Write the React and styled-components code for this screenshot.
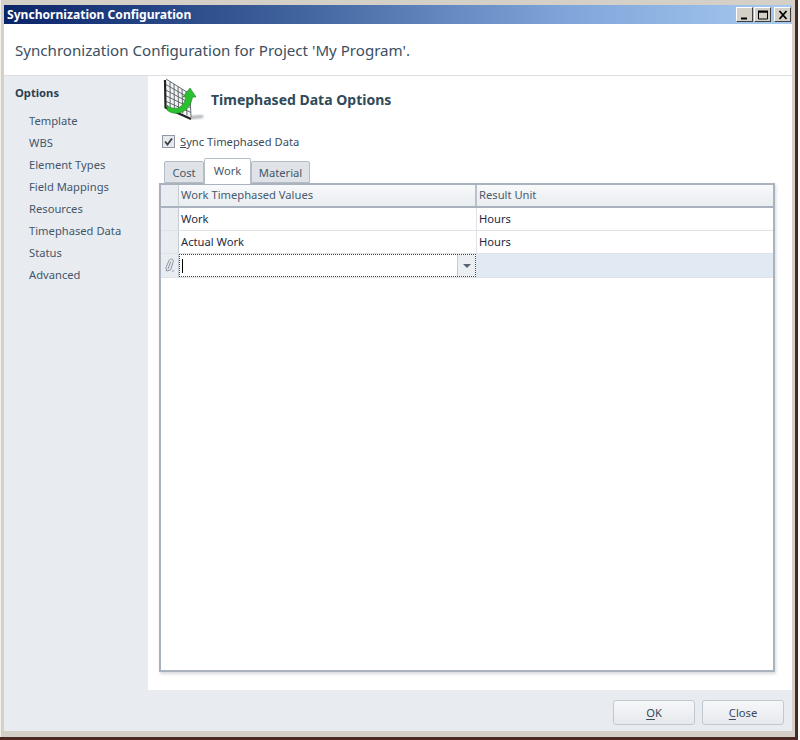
import React from 'react';
import styled, { createGlobalStyle } from 'styled-components';

const GlobalStyle = createGlobalStyle`
	html, body {
		margin: 0;
		padding: 0;
		background: #ffffff;
	}
	body {
		font-family: 'Noto Sans', 'Open Sans', sans-serif;
		font-size: 11.2px;
		color: #2a3a4a;
	}
`;

const Shadow = styled.div`
	width: 798px;
	height: 740px;
	box-sizing: border-box;
	background: #4a2a20;
	padding: 0 3px 3px 0;
`;

const Frame = styled.div`
	height: 100%;
	box-sizing: border-box;
	background: #d4d0c8;
	border-left: 1px solid #f2f0ea;
	padding: 5px 3px 6px 3px;
	display: flex;
	flex-direction: column;
`;

const TitleBar = styled.div`
	height: 19px;
	flex: none;
	display: flex;
	align-items: center;
	justify-content: space-between;
	padding: 0 0 0 3px;
	background: linear-gradient(90deg, #0a246a 0%, #3d5f9a 35%, #7ea3d8 70%, #a6caf0 100%);
	color: #ffffff;
	font-family: 'Noto Sans', sans-serif;
	font-weight: 700;
	font-size: 12.1px;
`;

const WinButtons = styled.div`
	display: flex;
	gap: 1px;
	margin-right: 1px;
`;

const WinButton = styled.div`
	width: 17px;
	height: 15px;
	box-sizing: border-box;
	background: #d4d0c8;
	border: 1px solid;
	border-color: #ffffff #404040 #404040 #ffffff;
	display: flex;
	align-items: center;
	justify-content: center;
	margin-left: ${(props) => (props.gap ? '2px' : '0')};
`;

const Header = styled.div`
	height: 50px;
	flex: none;
	background: #ffffff;
	border-bottom: 1px solid #dcdfe3;
	display: flex;
	align-items: center;
	padding-left: 11px;
	padding-top: 1px;
	box-sizing: content-box;
	font-size: 15.1px;
	color: #3b4f5f;
`;

const Body = styled.div`
	flex: 1;
	min-height: 0;
	display: flex;
	background: #e8ecf1;
`;

const Sidebar = styled.div`
	width: 144px;
	flex: none;
	box-sizing: border-box;
	padding: 8px 0 0 11px;
`;

const SideTitle = styled.div`
	font-weight: 700;
	font-size: 11.2px;
	line-height: 18px;
	color: #2c3f50;
	margin-bottom: 8px;
`;

const SideItem = styled.div`
	height: 22px;
	line-height: 22px;
	padding-left: 14px;
	color: #44566a;
`;

const Main = styled.div`
	flex: 1;
	display: flex;
	flex-direction: column;
	min-width: 0;
`;

const Content = styled.div`
	flex: 1;
	min-height: 0;
	background: #ffffff;
	padding: 2px 17px 18px 11px;
	display: flex;
	flex-direction: column;
`;

const SectionHead = styled.div`
	display: flex;
	align-items: center;
	height: 44px;
	gap: 5px;
	margin-left: 3px;
`;

const SectionTitle = styled.div`
	font-weight: 700;
	font-size: 14px;
	color: #2f4a58;
	padding-bottom: 2px;
`;

const CheckRow = styled.div`
	display: flex;
	align-items: center;
	gap: 5px;
	margin: 10px 0 0 3px;
	height: 18px;
	color: #3a4a5a;
`;

const CheckBox = styled.div`
	width: 13px;
	height: 13px;
	box-sizing: border-box;
	background: #e6e8ec;
	border: 1px solid #8f98a4;
	display: flex;
	align-items: center;
	justify-content: center;
`;

const TabRow = styled.div`
	display: flex;
	align-items: flex-end;
	margin: 7px 0 0 5px;
	height: 26px;
	position: relative;
	z-index: 1;
`;

const Tab = styled.div`
	box-sizing: border-box;
	width: ${(props) => props.width}px;
	height: ${(props) => (props.active ? 26 : 22)}px;
	background: ${(props) => (props.active ? '#ffffff' : '#dfe3e8')};
	border: 1px solid #b4bcc6;
	border-bottom: ${(props) => (props.active ? 'none' : '1px solid #b4bcc6')};
	margin-bottom: ${(props) => (props.active ? '-1px' : '0')};
	text-align: center;
	line-height: ${(props) => (props.active ? '23px' : '21px')};
	color: #46586a;
	border-radius: 2px 2px 0 0;
`;

const Grid = styled.div`
	flex: 1;
	min-height: 0;
	background: #ffffff;
	border: 2px solid #a9b2bd;
	box-shadow: 1px 2px 3px rgba(120, 130, 140, 0.3);
`;

const GridRow = styled.div`
	display: grid;
	grid-template-columns: 18px 298px 1fr;
	height: ${(props) => (props.tall ? 23 : 22)}px;
	border-bottom: 1px solid #dfe3e8;
	background: ${(props) => (props.current ? '#e1e9f3' : 'transparent')};
`;

const HeaderRow = styled(GridRow)`
	height: 21px;
	border-bottom: 2px solid #a9b2bd;
	background: linear-gradient(180deg, #f8f9fa, #e9edf1);
`;

const Indicator = styled.div`
	background: #e9edf1;
	border-right: 1px solid #c4cbd3;
	display: flex;
	align-items: center;
	justify-content: center;
`;

const Cell = styled.div`
	display: flex;
	align-items: center;
	padding: 0 0 2px 2px;
	min-width: 0;
	color: ${(props) => (props.head ? '#4a5a70' : '#1f2a44')};
	border-right: ${(props) => (props.last ? 'none' : '1px solid #dfe3e8')};
`;

const HeadCell = styled(Cell)`
	border-right: ${(props) => (props.last ? 'none' : '2px solid #b9c1ca')};
`;

const EditCell = styled.div`
	position: relative;
	display: flex;
	align-items: center;
	justify-content: space-between;
	background: #ffffff;
	outline: 1px dotted #444444;
	outline-offset: -1px;
	padding-left: 3px;
	margin-right: 1px;
`;

const Caret = styled.div`
	width: 1px;
	height: 14px;
	background: #000000;
`;

const DropButton = styled.div`
	width: 17px;
	height: 21px;
	margin-right: 1px;
	background: #eceff2;
	border-left: 1px solid #c4cbd3;
	display: flex;
	align-items: center;
	justify-content: center;
	&::after {
		content: '';
		border-left: 4px solid transparent;
		border-right: 4px solid transparent;
		border-top: 4px solid #5a6470;
	}
`;

const Footer = styled.div`
	height: 41px;
	flex: none;
	box-sizing: border-box;
	display: flex;
	justify-content: flex-end;
	align-items: center;
	gap: 7px;
	padding: 3px 8px 0 0;
`;

const Button = styled.div`
	width: 82px;
	height: 25px;
	box-sizing: border-box;
	border: 1px solid #c3c8ce;
	border-radius: 3px;
	background: linear-gradient(180deg, #f6f7f9, #e6e9ed);
	display: flex;
	align-items: center;
	justify-content: center;
	color: #3c4a58;
	u {
		text-underline-offset: 2px;
	}
`;

const ChartIcon = () => (
	<svg width="44" height="44" viewBox="0 0 44 44">
		<defs>
			<filter id="iconBlur"><feGaussianBlur stdDeviation="1.2" /></filter>
		</defs>
		<path d="M28 38 L41 37 L41 40 L28 41 Z" fill="#a8adb2" filter="url(#iconBlur)" />
		<path d="M4 1 L28 16 L29 39 L4 29 Z" fill="#f4f5f6" />
		<g stroke="#565c62" strokeWidth="0.9" fill="none">
			<path d="M8 3.5 L8.2 30.5" />
			<path d="M12 6 L12.4 32" />
			<path d="M16 8.5 L16.6 34" />
			<path d="M20 11 L20.8 35.5" />
			<path d="M24 13.5 L25 37.5" />
			<path d="M4 6.6 L28.2 20.6" />
			<path d="M4 12.2 L28.4 25.2" />
			<path d="M4 17.8 L28.6 29.8" />
			<path d="M4 23.4 L28.8 34.4" />
			<path d="M4 1 L28 16 L29 39" />
		</g>
		<path d="M3 2 L3.5 29.5 L29 41" fill="none" stroke="#222222" strokeWidth="2.2" />
		<path d="M5 27 C10 32 21 33 24 19 L21 19 L28 10 L34 19 L30.5 19 C28 35 13 39 5 32 Z" fill="#2bc02f" stroke="#16801c" strokeWidth="0.6" />
	</svg>
);

const PencilIcon = () => (
	<svg width="11" height="15" viewBox="0 0 11 15">
		<path d="M7.5 1 C9.5 1 9.5 3 9 4.5 L6.5 12 L2.5 13 L2 9.5 L5 2.5 C5.5 1.5 6.5 1 7.5 1 Z M4 11 L6.8 3.5" fill="none" stroke="#8a949e" strokeWidth="1" />
		<circle cx="9" cy="13" r="0.8" fill="#8a949e" />
	</svg>
);

const CheckMark = () => (
	<svg width="11" height="11" viewBox="0 0 11 11">
		<path d="M2 5.5 L4.5 8.5 L9 2.5" fill="none" stroke="#3a3f46" strokeWidth="1.8" />
	</svg>
);

const menu = ['Template', 'WBS', 'Element Types', 'Field Mappings', 'Resources', 'Timephased Data', 'Status', 'Advanced'];
const rows = ['Work', 'Actual Work'];

const App = () => {
	return (
		<Shadow>
			<GlobalStyle />
			<Frame>
				<TitleBar>
					Synchornization Configuration
					<WinButtons>
						<WinButton>
							<svg width="10" height="10" viewBox="0 0 10 10"><path d="M1 8.5 H7" stroke="#000" strokeWidth="2" /></svg>
						</WinButton>
						<WinButton>
							<svg width="10" height="10" viewBox="0 0 10 10"><path d="M0.5 1.5 H9.5 V9 H0.5 Z M0.5 2 H9.5" fill="none" stroke="#000" strokeWidth="1" /><path d="M0 1.5 H10" stroke="#000" strokeWidth="2" /></svg>
						</WinButton>
						<WinButton gap>
							<svg width="10" height="10" viewBox="0 0 10 10"><path d="M1.5 1 L8.5 9 M8.5 1 L1.5 9" stroke="#000" strokeWidth="1.8" /></svg>
						</WinButton>
					</WinButtons>
				</TitleBar>
				<Header>Synchronization Configuration for Project 'My Program'.</Header>
				<Body>
					<Sidebar>
						<SideTitle>Options</SideTitle>
						{menu.map((item) => (
							<SideItem key={item}>{item}</SideItem>
						))}
					</Sidebar>
					<Main>
						<Content>
							<SectionHead>
								<ChartIcon />
								<SectionTitle>Timephased Data Options</SectionTitle>
							</SectionHead>
							<CheckRow>
								<CheckBox><CheckMark /></CheckBox>
								<span><u>S</u>ync Timephased Data</span>
							</CheckRow>
							<TabRow>
								<Tab width={40}>Cost</Tab>
								<Tab width={47} active>Work</Tab>
								<Tab width={59}>Material</Tab>
							</TabRow>
							<Grid>
								<HeaderRow>
									<Indicator />
									<HeadCell head>Work Timephased Values</HeadCell>
									<HeadCell head last>Result Unit</HeadCell>
								</HeaderRow>
								{rows.map((row) => (
									<GridRow key={row}>
										<Indicator />
										<Cell>{row}</Cell>
										<Cell last>Hours</Cell>
									</GridRow>
								))}
								<GridRow current tall>
									<Indicator><PencilIcon /></Indicator>
									<EditCell>
										<Caret />
										<DropButton />
									</EditCell>
									<Cell last />
								</GridRow>
							</Grid>
						</Content>
						<Footer>
							<Button><span><u>O</u>K</span></Button>
							<Button><span><u>C</u>lose</span></Button>
						</Footer>
					</Main>
				</Body>
			</Frame>
		</Shadow>
	);
};

export default App;
